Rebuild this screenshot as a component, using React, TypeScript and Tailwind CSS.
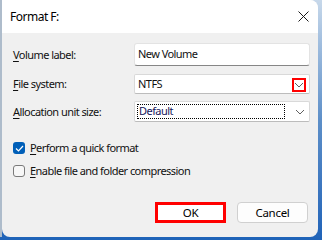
import React from "react";

const font = { fontFamily: '"Noto Sans", "Open Sans", sans-serif' };

function Chevron() {
  return (
    <svg width="10" height="6" viewBox="0 0 10 6" className="text-[#606060]">
      <path d="M1 1 L5 5 L9 1" fill="none" stroke="currentColor" strokeWidth="1" />
    </svg>
  );
}

function Label({ k, rest }: { k: string; rest: string }) {
  return (
    <span className="text-[11px] leading-[16px] tracking-[-0.55px] text-[#111]">
      <span className="underline underline-offset-[2px]">{k}</span>
      {rest}
    </span>
  );
}

export default function App() {
  return (
    <div
      className="w-[322px] h-[240px] overflow-hidden bg-gradient-to-b from-[#c7d8ea] via-[#5d8fc8] to-[#1f63b8]"
      style={font}
    >
      <div className="flex h-[237px]">
        <div className="w-[2px] bg-[#aebccb]" />
        <div className="w-[316px] h-[237px] bg-[#f0f0f0] rounded-tr-[8px] rounded-b-[8px] overflow-hidden flex flex-col">
          {/* title bar */}
          <div className="h-[33px] bg-white flex items-center justify-between pl-[8px] pr-[9px] shrink-0">
            <span className="text-[12px] tracking-[-0.5px] text-black">Format F:</span>
            <svg width="11" height="11" viewBox="0 0 11 11">
              <path d="M0.5 0.5 L10.5 10.5 M10.5 0.5 L0.5 10.5" stroke="#1a1a1a" strokeWidth="1" />
            </svg>
          </div>

          {/* body */}
          <div className="flex flex-col pl-[11px] pt-[10px]">
            <div className="grid grid-cols-[121px_176px] items-center">
              <Label k="V" rest="olume label:" />
              <div className="h-[23px] bg-white border border-[#e3e3e3] border-b-[#868686] rounded-[3px] flex items-center pl-[3px] text-[11px] tracking-[-0.55px] text-[#111]">
                New Volume
              </div>
            </div>

            <div className="grid grid-cols-[121px_176px] items-center mt-[8px]">
              <Label k="F" rest="ile system:" />
              <div className="relative h-[20px] bg-white border border-[#d9d9d9] border-b-[#bcbcbc] rounded-[2px] flex items-center pl-[3px] text-[11px] tracking-[-0.55px] text-[#111]">
                NTFS
                <div className="absolute right-[3px] top-[3px] w-[14px] h-[14px] border-2 border-[#ff0000] flex items-center justify-center">
                  <Chevron />
                </div>
              </div>
            </div>

            <div className="grid grid-cols-[121px_176px] items-center mt-[7px]">
              <Label k="A" rest="llocation unit size:" />
              <div className="h-[21px] bg-white border border-[#d9d9d9] border-b-[#bcbcbc] rounded-[2px] flex items-center pl-[2px] pr-[4px] text-[11px] tracking-[-0.55px] text-[#111]">
                <div className="flex-1 h-[15px] border border-dotted border-black flex items-center pl-[1px] text-[#14145a]">
                  Default
                </div>
                <div className="w-[20px] flex justify-end">
                  <Chevron />
                </div>
              </div>
            </div>

            <div className="flex items-center gap-[5px] h-[16px] mt-[18px]">
              <div className="w-[12px] h-[12px] rounded-[3px] bg-[#005fb8] flex items-center justify-center">
                <svg width="9" height="7" viewBox="0 0 9 7">
                  <path d="M1 3.5 L3.5 6 L8 1" fill="none" stroke="white" strokeWidth="1.2" />
                </svg>
              </div>
              <Label k="P" rest="erform a quick format" />
            </div>

            <div className="flex items-center gap-[5px] h-[16px] mt-[7px]">
              <div className="w-[12px] h-[12px] rounded-[3px] border border-[#7a7a7a] bg-[#f7f7f7]" />
              <Label k="E" rest="nable file and folder compression" />
            </div>

            <div className="flex justify-end gap-[11px] mt-[23px] pr-[10px]">
              <div className="w-[71px] h-[21px] border-[3px] border-[#ff0000] bg-white flex items-center justify-center text-[11.5px] tracking-[-0.3px] text-black">
                OK
              </div>
              <div className="w-[71px] h-[21px] border border-[#d0d0d0] rounded-[4px] bg-[#fdfdfd] flex items-center justify-center text-[11.5px] tracking-[-0.3px] text-black">
                Cancel
              </div>
            </div>
          </div>
        </div>
      </div>
      <div className="h-[3px]" />
    </div>
  );
}
